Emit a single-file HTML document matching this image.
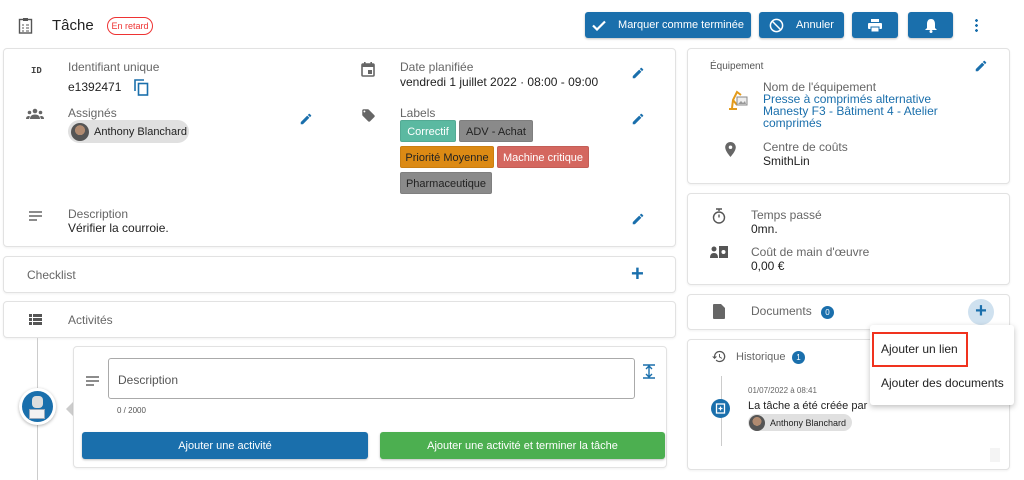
<!DOCTYPE html>
<html><head><meta charset="utf-8"><style>
*{box-sizing:border-box;margin:0;padding:0}
body{width:1024px;height:480px;overflow:hidden;background:#fff;font-family:"Liberation Sans",sans-serif;color:#222;position:relative}
.a{position:absolute}
.card{position:absolute;background:#fff;border:1px solid #e2e2e2;border-radius:4px;box-shadow:0 1px 2px rgba(0,0,0,.06)}
.lbl{font-size:12px;color:#666;position:absolute;white-space:nowrap}
.val{font-size:12px;color:#222;position:absolute;white-space:nowrap}
.btn{position:absolute;background:#1a6fac;color:#fff;border-radius:3px;font-size:11px;display:flex;align-items:center;justify-content:center;box-shadow:0 1px 2px rgba(0,0,0,.25);white-space:nowrap}
.tag{position:absolute;height:22px;border-radius:2px;font-size:11px;line-height:22px;padding:0;text-align:center;white-space:nowrap;overflow:hidden;border:1px solid rgba(0,0,0,.08)}
.pen{position:absolute;width:14px;height:14px}
.chip{position:absolute;background:#e0e0e0;border-radius:12px;font-size:10px;display:flex;align-items:center;white-space:nowrap}
.av{width:16px;height:16px;border-radius:50%;background:radial-gradient(circle at 50% 40%,#b08a70 0 35%,#555 36%);margin:0 5px 0 3px;flex:none}
.badge{position:absolute;width:13px;height:13px;border-radius:50%;background:#1a6fac;color:#fff;font-size:8px;text-align:center;line-height:13px}
</style></head><body>
<svg width="0" height="0" style="position:absolute"><defs>
<symbol id="pen" viewBox="0 0 24 24"><path fill="#1a6fac" d="M3 17.25V21h3.75L17.8 9.94l-3.75-3.75L3 17.25zM20.7 7.04a1 1 0 000-1.41l-2.34-2.34a1 1 0 00-1.41 0l-1.83 1.83 3.75 3.75 1.83-1.83z"/></symbol>
</defs></svg>

<!-- header -->
<svg class="a" style="left:18px;top:17px" width="15" height="17" viewBox="0 0 15 17"><rect x="1.5" y="2.5" width="12" height="13.5" fill="none" stroke="#555" stroke-width="1.4"/><rect x="5" y="1" width="5" height="3" fill="#555"/><path d="M4 8h2M8 8h3M4 11h2M8 11h3M4 14h2M8 14h3" stroke="#555" stroke-width="1"/></svg>
<div class="a" style="left:52px;top:17px;font-size:15px">Tâche</div>
<div class="a" style="left:107px;top:17px;width:46px;height:18px;border:1px solid #e33;border-radius:9px;color:#e33;font-size:9px;line-height:16px;text-align:center;white-space:nowrap">En retard</div>

<div class="btn" style="left:585px;top:12px;width:166px;height:26px"><svg width="14" height="11" viewBox="0 0 14 11" style="margin-right:12px"><path d="M1 5.5l4 4L13 1.5" stroke="#fff" stroke-width="2.2" fill="none"/></svg>Marquer comme terminée</div>
<div class="btn" style="left:759px;top:12px;width:85px;height:26px"><svg width="15" height="15" viewBox="0 0 16 16" style="margin-right:12px"><circle cx="8" cy="8" r="6.5" fill="none" stroke="#fff" stroke-width="1.6"/><path d="M3.5 3.5l9 9" stroke="#fff" stroke-width="1.6"/></svg>Annuler</div>
<div class="btn" style="left:852px;top:12px;width:46px;height:26px"><svg width="14" height="13" viewBox="0 0 14 13"><rect x="3" y="0" width="8" height="3" fill="#fff"/><rect x="0" y="4" width="14" height="6" rx="1" fill="#fff"/><rect x="3" y="8" width="8" height="5" fill="#fff" stroke="#1a6fac"/></svg></div>
<div class="btn" style="left:908px;top:12px;width:45px;height:26px"><svg width="12" height="15" viewBox="0 0 12 15"><path d="M6 1c3 0 4 2.5 4 5v4l2 2H0l2-2V6c0-2.5 1-5 4-5z" fill="#fff"/><circle cx="6" cy="13.5" r="1.5" fill="#fff"/></svg></div>
<div class="a" style="left:975px;top:18px;width:3px;height:14px;background:radial-gradient(circle,#1a6fac 1.3px,transparent 1.5px) 0 0/3px 5px"></div>

<!-- left main card -->
<div class="card" style="left:3px;top:48px;width:673px;height:199px">
 <div class="a" style="left:27px;top:17px;font-size:9px;font-family:'Liberation Mono',monospace;color:#444;font-weight:bold">ID</div>
 <div class="lbl" style="left:64px;top:11px">Identifiant unique</div>
 <div class="val" style="left:64px;top:31px">e1392471</div>
 <svg class="a" style="left:130px;top:30px" width="15" height="17" viewBox="0 0 15 17"><path d="M1 12V1h9" fill="none" stroke="#1a6fac" stroke-width="1.6"/><rect x="4.5" y="4.5" width="9" height="11.5" fill="none" stroke="#1a6fac" stroke-width="1.6"/></svg>
 <svg class="a" style="left:22px;top:59px" width="18" height="11" viewBox="0 0 18 11"><circle cx="9" cy="3" r="2.3" fill="#666"/><circle cx="3.5" cy="4.5" r="1.8" fill="#666"/><circle cx="14.5" cy="4.5" r="1.8" fill="#666"/><path d="M4 11c0-3 2-4.5 5-4.5s5 1.5 5 4.5zM0 11c0-2 1-3 3-3l1 .5-1 2.5zM18 11c0-2-1-3-3-3l-1 .5 1 2.5z" fill="#666"/></svg>
 <div class="lbl" style="left:64px;top:57px">Assignés</div>
 <div class="chip" style="left:64px;top:71px;width:121px;height:23px;font-size:11px"><div class="av" style="width:18px;height:18px"></div>Anthony Blanchard</div>
 <svg class="pen" style="left:295px;top:63px"><use href="#pen"/></svg>
 <svg class="a" style="left:357px;top:13px" width="14" height="15" viewBox="0 0 14 15"><rect x="1" y="2" width="12" height="12" rx="1" fill="none" stroke="#666" stroke-width="1.6"/><rect x="1" y="2" width="12" height="3" fill="#666"/><rect x="3" y="0" width="1.6" height="3" fill="#666"/><rect x="9.4" y="0" width="1.6" height="3" fill="#666"/><rect x="7" y="8" width="4" height="4" fill="#666"/></svg>
 <div class="lbl" style="left:396px;top:11px">Date planifiée</div>
 <div class="val" style="left:396px;top:26px">vendredi 1 juillet 2022 · 08:00 - 09:00</div>
 <svg class="pen" style="left:627px;top:17px"><use href="#pen"/></svg>
 <svg class="a" style="left:357px;top:59px" width="15" height="15" viewBox="0 0 24 24"><path fill="#666" d="M21.4 11.6l-9-9C12.05 2.25 11.55 2 11 2H4c-1.1 0-2 .9-2 2v7c0 .55.22 1.05.59 1.42l9 9c.36.36.86.58 1.41.58.55 0 1.050-.22 1.41-.59l7-7c.37-.36.59-.86.59-1.41 0-.55-.23-1.06-.6-1.4zM5.5 7C4.670 7 4 6.33 4 5.5S4.67 4 5.5 4 7 4.67 7 5.5 6.33 7 5.5 7z"/></svg>
 <div class="lbl" style="left:396px;top:57px">Labels</div>
 <div class="tag" style="left:396px;top:71px;width:56px;background:#5bb9a1;color:#fff">Correctif</div>
 <div class="tag" style="left:455px;top:71px;width:74px;background:#8a8a8a;color:#222">ADV - Achat</div>
 <div class="tag" style="left:396px;top:97px;width:94px;background:#dc8a14;color:#222">Priorité Moyenne</div>
 <div class="tag" style="left:493px;top:97px;width:92px;background:#d4675f;color:#fff">Machine critique</div>
 <div class="tag" style="left:396px;top:123px;width:92px;background:#8a8a8a;color:#222">Pharmaceutique</div>
 <svg class="pen" style="left:627px;top:63px"><use href="#pen"/></svg>
 <svg class="a" style="left:25px;top:162px" width="13" height="10" viewBox="0 0 13 10"><path d="M0 1h13M0 5h13M0 9h8" stroke="#666" stroke-width="1.4"/></svg>
 <div class="lbl" style="left:64px;top:158px">Description</div>
 <div class="val" style="left:64px;top:172px">Vérifier la courroie.</div>
 <svg class="pen" style="left:627px;top:163px"><use href="#pen"/></svg>
</div>

<div class="card" style="left:3px;top:256px;width:673px;height:37px">
 <div class="lbl" style="left:23px;top:11px;font-size:12px">Checklist</div>
 <div class="a" style="left:627px;top:4px;color:#1a6fac;font-size:22px;font-weight:bold">+</div>
</div>
<div class="card" style="left:3px;top:301px;width:673px;height:37px">
 <svg class="a" style="left:25px;top:12px" width="13" height="11" viewBox="0 0 13 11"><path d="M0 0h3v3H0zM4 0h9v3H4zM0 4h3v3H0zM4 4h9v3H4zM0 8h3v3H0zM4 8h9v3H4z" fill="#555"/></svg>
 <div class="lbl" style="left:64px;top:11px">Activités</div>
</div>

<div class="a" style="left:37px;top:338px;width:1px;height:142px;background:#ccc"></div>
<div class="a" style="left:19px;top:388px;width:37px;height:37px;border-radius:50%;background:#fff;box-shadow:0 1px 3px rgba(0,0,0,.3)"></div>
<div class="a" style="left:22px;top:391px;width:31px;height:31px;border-radius:50%;background:#1a6fac;overflow:hidden"><div class="a" style="left:10px;top:5px;width:11px;height:12px;background:#ddd;border-radius:4px"></div><div class="a" style="left:7px;top:18px;width:16px;height:10px;background:#f2f2f2;border:1px solid #9ab"></div></div>
<div class="a" style="left:66px;top:402px;width:0;height:0;border:7px solid transparent;border-right-color:#ccc;border-left:0"></div>
<div class="card" style="left:73px;top:346px;width:594px;height:122px">
 <svg class="a" style="left:12px;top:29px" width="13" height="10" viewBox="0 0 13 10"><path d="M0 1h13M0 5h13M0 9h8" stroke="#666" stroke-width="1.4"/></svg>
 <div class="a" style="left:34px;top:11px;width:527px;height:41px;border:1px solid #aaa;border-radius:3px"></div>
 <div class="a" style="left:44px;top:26px;font-size:12px;color:#555">Description</div>
 <svg class="a" style="left:569px;top:17px" width="12" height="15" viewBox="0 0 12 15"><path d="M0 1h12M0 14h12M6 3v9M3 5l3-3 3 3M3 10l3 3 3-3" stroke="#1a6fac" stroke-width="1.4" fill="none"/></svg>
 <div class="a" style="left:43px;top:59px;font-size:8px;color:#555">0 / 2000</div>
 <div class="btn" style="left:8px;top:85px;width:286px;height:27px;font-size:11px">Ajouter une activité</div>
 <div class="btn" style="left:306px;top:85px;width:285px;height:27px;font-size:11px;background:#4caf50">Ajouter une activité et terminer la tâche</div>
</div>

<!-- right column -->
<div class="card" style="left:687px;top:48px;width:323px;height:136px">
 <div class="a" style="left:22px;top:12px;font-size:10px;color:#555">Équipement</div>
 <svg class="pen" style="left:286px;top:10px"><use href="#pen"/></svg>
 <svg class="a" style="left:38px;top:40px" width="22" height="22" viewBox="0 0 22 22"><path d="M3 20h8M6 19l1-8 4-8 4 3M7 11l4 5" stroke="#e39a1a" stroke-width="2" fill="none"/><rect x="11" y="8" width="10" height="8" fill="#eee" stroke="#888"/><path d="M12 15l3-3 2 2 2-2 1 3z" fill="#999"/></svg>
 <div class="lbl" style="left:75px;top:31px">Nom de l'équipement</div>
 <div class="a" style="left:75px;top:44px;font-size:12px;color:#1a6fac;line-height:12px;width:200px">Presse à comprimés alternative Manesty F3 - Bâtiment 4 - Atelier comprimés</div>
 <svg class="a" style="left:37px;top:93px" width="11" height="15" viewBox="0 0 24 34"><path fill="#666" d="M12 0C5.4 0 0 5.4 0 12c0 9 12 22 12 22s12-13 12-22C24 5.4 18.6 0 12 0zm0 16a4 4 0 110-8 4 4 0 010 8z"/></svg>
 <div class="lbl" style="left:75px;top:91px">Centre de coûts</div>
 <div class="val" style="left:75px;top:105px">SmithLin</div>
</div>
<div class="card" style="left:687px;top:193px;width:323px;height:92px">
 <svg class="a" style="left:24px;top:14px" width="14" height="16" viewBox="0 0 14 16"><path d="M4 1h6M7 1v2" stroke="#555" stroke-width="1.4"/><circle cx="7" cy="9.5" r="5.5" fill="none" stroke="#555" stroke-width="1.4"/><path d="M7 9.5V6.5" stroke="#555" stroke-width="1.4"/></svg>
 <div class="lbl" style="left:63px;top:14px">Temps passé</div>
 <div class="val" style="left:63px;top:28px">0mn.</div>
 <svg class="a" style="left:22px;top:51px" width="18" height="14" viewBox="0 0 18 14"><circle cx="4" cy="4" r="2.5" fill="#555"/><path d="M0 13c0-4 2-5 4-5s4 1 4 5z" fill="#555"/><rect x="9" y="1" width="9" height="12" fill="#555"/><circle cx="13.5" cy="7" r="2" fill="#fff"/></svg>
 <div class="lbl" style="left:63px;top:51px">Coût de main d'œuvre</div>
 <div class="val" style="left:63px;top:65px">0,00 €</div>
</div>
<div class="card" style="left:687px;top:294px;width:323px;height:36px">
 <svg class="a" style="left:25px;top:9px" width="12" height="15" viewBox="0 0 12 15"><path d="M0 1a1 1 0 011-1h7l4 4v10a1 1 0 01-1 1H1a1 1 0 01-1-1z" fill="#666"/></svg>
 <div class="lbl" style="left:63px;top:9px">Documents</div>
 <div class="badge" style="left:133px;top:11px">0</div>
 <div class="a" style="left:280px;top:4px;width:26px;height:26px;border-radius:50%;background:#cfe1ef;color:#1a6fac;font-size:20px;font-weight:bold;text-align:center;line-height:25px">+</div>
</div>
<div class="card" style="left:687px;top:339px;width:323px;height:131px">
 <svg class="a" style="left:23px;top:9px" width="16" height="15" viewBox="0 0 24 24"><path fill="#555" d="M13 3a9 9 0 00-9 9H1l3.9 3.9.07.14L9 12H6c0-3.9 3.1-7 7-7s7 3.1 7 7-3.1 7-7 7c-1.9 0-3.7-.8-4.9-2.1l-1.4 1.4A9 9 0 1013 3zm-1 5v5l4.3 2.5.7-1.2-3.5-2.1V8z"/></svg>
 <div class="lbl" style="left:48px;top:11px;font-size:11px">Historique</div>
 <div class="badge" style="left:104px;top:11px">1</div>
 <div class="a" style="left:33px;top:36px;width:1px;height:70px;background:#ccc"></div>
 <div class="a" style="left:23px;top:59px;width:19px;height:19px;border-radius:50%;background:#1a6fac"><svg width="19" height="19" viewBox="0 0 19 19"><rect x="5.5" y="5" width="8" height="9" fill="none" stroke="#fff" stroke-width="1.3"/><path d="M9.5 7.5v4M7.5 9.5h4" stroke="#fff" stroke-width="1.2"/></svg></div>
 <div class="a" style="left:60px;top:46px;font-size:8px;color:#666">01/07/2022 à 08:41</div>
 <div class="a" style="left:60px;top:60px;font-size:11px">La tâche a été créée par</div>
 <div class="chip" style="left:60px;top:74px;width:104px;height:17px;font-size:9px"><div class="av" style="margin-left:1px"></div>Anthony Blanchard</div>
 <div class="a" style="left:302px;top:108px;width:10px;height:14px;background:#f4f4f4"></div>
</div>

<!-- menu -->
<div class="a" style="left:870px;top:325px;width:144px;height:80px;background:#fff;border-radius:3px;box-shadow:0 2px 6px rgba(0,0,0,.25)"></div>
<div class="a" style="left:872px;top:332px;width:96px;height:35px;border:2px solid #f0321e"></div>
<div class="a" style="left:881px;top:342px;font-size:12px;white-space:nowrap">Ajouter un lien</div>
<div class="a" style="left:881px;top:376px;font-size:12px;white-space:nowrap">Ajouter des documents</div>
</body></html>
